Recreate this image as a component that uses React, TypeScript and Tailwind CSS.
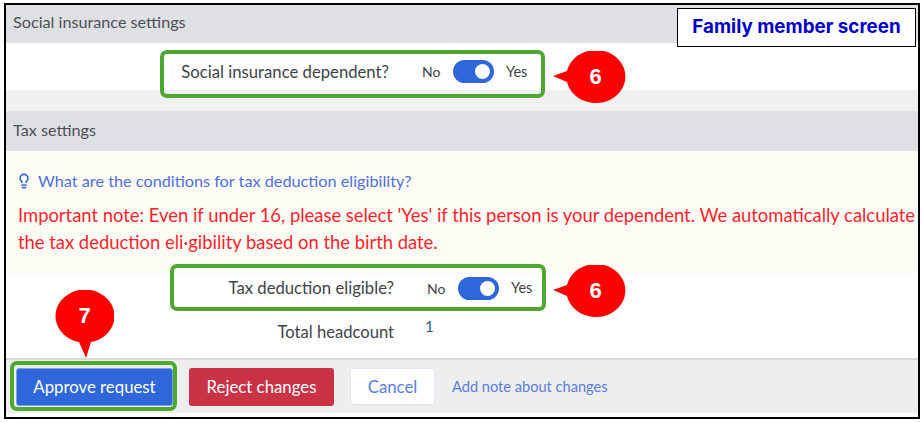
import { Lightbulb } from 'lucide-react'

function Toggle({ label, labelWidth }: { label: string; labelWidth: string }) {
  return (
    <div className="flex items-center text-[16.7px] text-[#3f4449]">
      <span className={`${labelWidth} whitespace-nowrap pt-[2px] text-right`}>{label}</span>
      <span className="ml-[33px] w-[31px] text-[14px]">No</span>
      <span className="relative h-[23px] w-[41px] rounded-full bg-[#2f66da]">
        <span className="absolute right-[4px] top-[4px] h-[15px] w-[15px] rounded-full bg-white" />
      </span>
      <span className="ml-[12px] text-[14.5px]">Yes</span>
    </div>
  )
}

function SideCallout({ n, className }: { n: string; className: string }) {
  return (
    <div className={`absolute h-[54px] w-[73px] ${className}`}>
      <svg width="73" height="54" viewBox="0 0 73 54" className="absolute left-0 top-0">
        <path d="M0 25 L14 20 A29.5 26.5 0 1 1 14 31 Z" fill="#ff0000" />
      </svg>
      <span className="absolute left-[13px] top-[9px] w-[59px] text-center font-['Liberation_Sans',sans-serif] text-[22px] font-bold leading-[34px] text-white">
        {n}
      </span>
    </div>
  )
}

export default function App() {
  return (
    <div className="relative h-[422px] w-[923px] bg-white font-['Lato',sans-serif]">
      <div className="absolute left-[4px] top-[3px] flex h-[416px] w-[916px] flex-col border-2 border-black bg-white">
        {/* Social insurance */}
        <div className="flex h-[38px] shrink-0 items-center bg-[#dfe0e4] pb-[4px] pl-[7px] text-[16.2px] text-[#4b4f54]">
          Social insurance settings
        </div>
        <div className="flex h-[47px] shrink-0 items-center pl-[174px] pt-[11px]">
          <Toggle label="Social insurance dependent?" labelWidth="w-[209px]" />
        </div>
        <div className="h-[21px] shrink-0 bg-[#f0f0f0]" />

        {/* Tax */}
        <div className="flex h-[40px] shrink-0 items-center bg-[#dfe0e4] pb-[2px] pl-[7px] text-[16.2px] text-[#4b4f54]">
          Tax settings
        </div>
        <div className="h-[123px] shrink-0 bg-[#fdfdf5] pl-[12px] pt-[18px]">
          <div className="flex items-center text-[16.25px] text-[#4f6fdc]">
            <Lightbulb size={16} strokeWidth={2.4} className="ml-[-2px] mr-[5px] text-[#3a62d8]" />
            <span className="ml-[1px]">What are the conditions for tax deduction eligibility?</span>
          </div>
          <p className="mt-[9px] w-[905px] whitespace-nowrap text-[18.4px] leading-[27px] text-[#ff1f2f]">
            Important note: Even if under 16, please select 'Yes' if this person is your dependent. We automatically calculate
            <br />
            the tax deduction eli·gibility based on the birth date.
          </p>
        </div>
        <div className="flex h-[84px] shrink-0 flex-col pl-[179px] pt-[2px]">
          <div className="flex h-[24px] items-center">
            <Toggle label="Tax deduction eligible?" labelWidth="w-[209px]" />
          </div>
          <div className="mt-[20px] flex items-center text-[16.6px] text-[#3f4449]">
            <span className="w-[209px] text-right">Total headcount</span>
            <span className="ml-[31px] mt-[-12px] text-[15px] text-[#1f5f8f]">1</span>
          </div>
        </div>

        {/* Footer */}
        <div className="flex h-[55px] shrink-0 items-center border-t-2 border-[#d9d9d9] bg-[#eeeeee] pl-[10px] pr-0 text-[16.8px]">
          <button className="h-[38px] w-[157px] rounded-[3px] border border-[#7fa0ea] bg-[#2f66da] text-white">Approve request</button>
          <button className="ml-[16px] h-[38px] w-[145px] rounded-[3px] bg-[#c93345] text-white">Reject changes</button>
          <button className="ml-[16px] h-[37px] w-[85px] rounded-[3px] border border-[#dfe6f7] bg-white text-[#5a7de0]">Cancel</button>
          <span className="ml-[17px] text-[14.6px] text-[#5a7de0]">Add note about changes</span>
        </div>
        <div className="flex-1 bg-white" />
      </div>

      {/* Annotations over the screenshot */}
      <div className="absolute left-[160px] top-[50px] h-[48px] w-[385px] rounded-[7px] border-[4px] border-[#4ea72e]" />
      <div className="absolute left-[170px] top-[264px] h-[47px] w-[376px] rounded-[7px] border-[4px] border-[#4ea72e]" />
      <div className="absolute left-[10px] top-[361px] h-[50px] w-[167px] rounded-[7px] border-[4px] border-[#4ea72e]" />
      <div className="absolute left-[677px] top-[8px] flex h-[39px] w-[239px] items-center justify-center border-[1.5px] border-black bg-white font-['Inter',sans-serif] text-[18.8px] font-bold text-[#0000cc]">
        Family member screen
      </div>
      <SideCallout n="6" className="left-[553px] top-[51px]" />
      <SideCallout n="6" className="left-[553px] top-[265px]" />
      <div className="absolute left-[55px] top-[290px] h-[68px] w-[59px]">
        <svg width="59" height="68" viewBox="0 0 59 68" className="absolute left-0 top-0">
          <path d="M24 52 A29.5 26.5 0 1 1 36 52 L31 68 Z" fill="#ff0000" />
        </svg>
        <span className="absolute left-0 top-[9px] w-[59px] text-center font-['Liberation_Sans',sans-serif] text-[22px] font-bold leading-[34px] text-white">
          7
        </span>
      </div>
    </div>
  )
}
